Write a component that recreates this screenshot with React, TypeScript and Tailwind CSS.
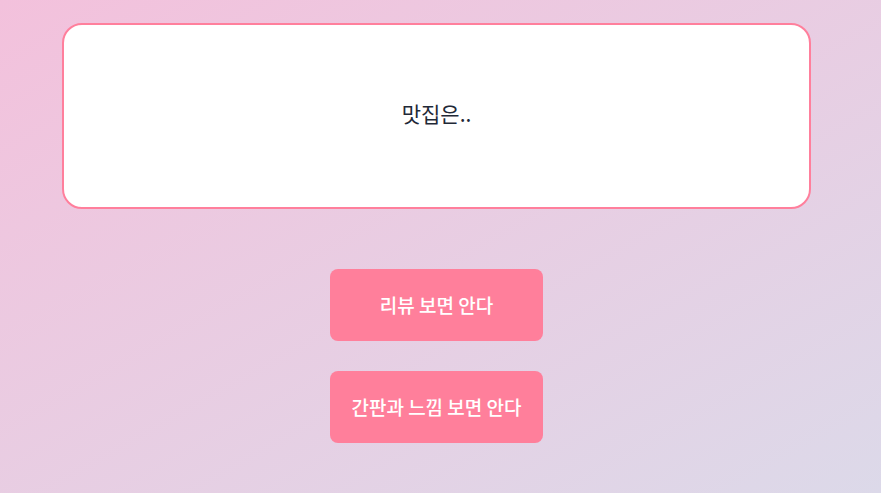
export default function App() {
  return (
    <div
      className="min-h-screen w-full bg-gradient-to-br from-[#f3c1dc] to-[#dcd9e9] pr-[8px]"
      style={{ fontFamily: '"Noto Sans CJK KR", "Noto Sans", sans-serif' }}
    >
      <div className="flex flex-col items-center pt-[23px]">
        {/* Result card */}
        <div className="flex h-[186px] w-[749px] items-center justify-center rounded-[20px] border-2 border-[#ff7f9c] bg-white">
          <p className="mb-[5px] text-[21px] text-[#1f2937]">맛집은..</p>
        </div>

        {/* Choices */}
        <div className="mt-[60px] flex flex-col items-center gap-[30px]">
          <button className="h-[72px] w-[213px] rounded-lg bg-[#ff7f9b] text-[19px] font-medium text-white">
            리뷰 보면 안다
          </button>
          <button className="h-[72px] w-[213px] rounded-lg bg-[#ff7f9b] text-[19px] font-medium text-white">
            간판과 느낌 보면 안다
          </button>
        </div>
      </div>
    </div>
  );
}
